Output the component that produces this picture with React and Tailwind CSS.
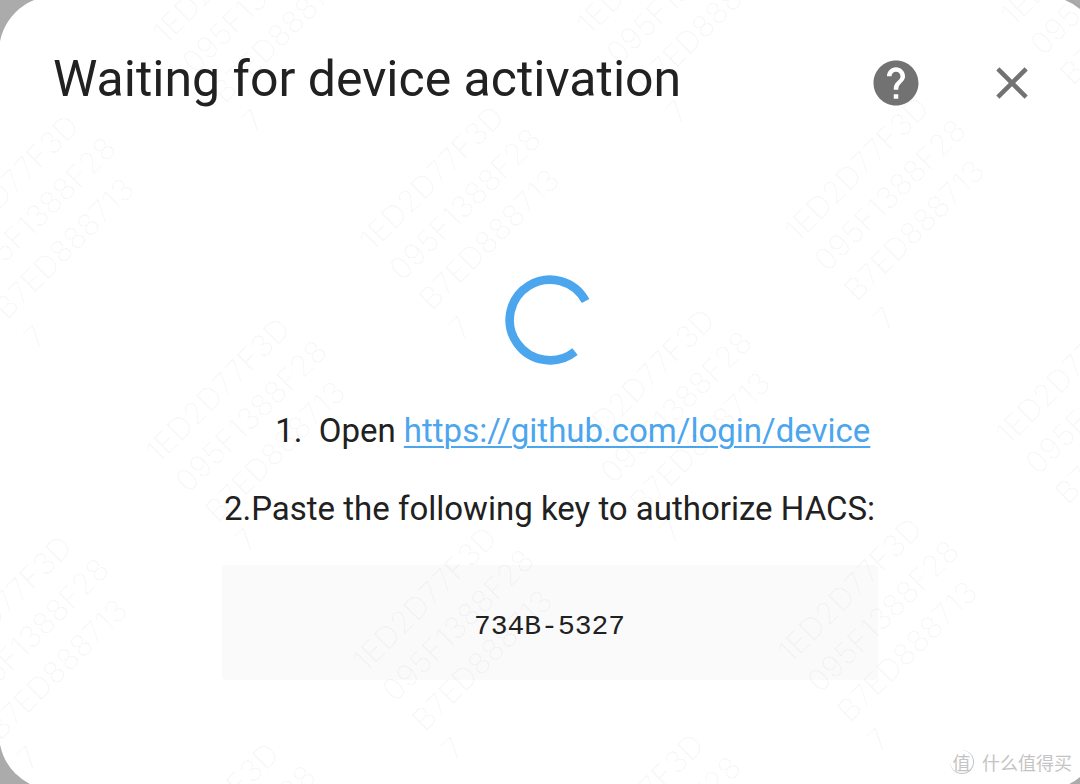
import { MdClose, MdHelp } from "react-icons/md";

const STAMP_LINES = ["1ED2D77F3D", "095F1388F28", "B7ED888713", "7"];

const STAMPS = [
  { left: 143, top: 23 },
  { left: 567, top: 14 },
  { left: 991, top: 5 },
  { left: -75, top: 239 },
  { left: 350, top: 230 },
  { left: 775, top: 221 },
  { left: 136, top: 442 },
  { left: 561, top: 433 },
  { left: 986, top: 424 },
  { left: -82, top: 660 },
  { left: 343, top: 651 },
  { left: 768, top: 642 },
  { left: 125, top: 867 },
  { left: 550, top: 858 },
];

function Stamps() {
  return (
    <div aria-hidden="true" className="pointer-events-none absolute inset-0 overflow-hidden">
      {STAMPS.map((pos) => (
        <div
          key={`${pos.left}-${pos.top}`}
          className="absolute origin-top-left -rotate-45 font-[Inter,sans-serif] text-[31px] leading-[42px] font-light whitespace-nowrap text-black/3"
          style={pos}
        >
          {STAMP_LINES.map((line) => (
            <div key={line}>{line}</div>
          ))}
        </div>
      ))}
    </div>
  );
}

function Spinner() {
  return (
    <svg role="img" aria-label="Loading" viewBox="0 0 90 90" className="mt-[161px] size-[90px]">
      <path d="M80.6 26.1A40.3 40.3 0 1 0 70 76.6" fill="none" stroke="#4ba6ee" strokeWidth="8.6" />
    </svg>
  );
}

function SiteMark() {
  return (
    <div className="absolute right-2 bottom-2.5 flex items-center gap-2 font-['Noto_Sans_CJK_SC',sans-serif] text-[#c4c4c4]">
      <span className="flex size-6 items-center justify-center rounded-full border-r border-b border-[#c4c4c4] text-[18px] leading-none">
        值
      </span>
      <span className="text-[18px] leading-6">什么值得买</span>
    </div>
  );
}

export default function App() {
  return (
    <div className="relative flex min-h-screen overflow-hidden bg-[#ababab] font-[Roboto,sans-serif] text-[#212121]">
      <main className="-mt-1 -mr-5 -mb-1.5 -ml-px flex-1 rounded-[56px] bg-white">
        <header className="flex items-center gap-[62px] pt-14 pr-[61px] pl-[54px]">
          <h1 className="flex-1 pb-2 text-[50px] leading-[54px]">Waiting for device activation</h1>
          <button type="button" aria-label="Help" className="text-[#727272]">
            <MdHelp className="size-[54px]" />
          </button>
          <button type="button" aria-label="Close" className="text-[#727272]">
            <MdClose className="size-[54px]" />
          </button>
        </header>

        <section className="flex flex-col items-center pb-20">
          <Spinner />
          <ol className="mt-[42px] list-decimal pl-[82px] text-[33px] leading-[48px]">
            <li className="pl-2">
              Open{" "}
              <a
                href="https://github.com/login/device"
                className="text-[#4ba6ee] underline decoration-2 underline-offset-4"
              >
                https://github.com/login/device
              </a>
            </li>
          </ol>
          <p className="mt-[30px] text-[33px] leading-[48px]">2.Paste the following key to authorize HACS:</p>
          <pre className="mt-8 w-[656px] rounded bg-[#fafafa] pt-10 pb-8 text-center font-['Liberation_Mono',monospace] text-[28px] leading-[43px]">
            734B-5327
          </pre>
        </section>
      </main>
      <Stamps />
      <SiteMark />
    </div>
  );
}
